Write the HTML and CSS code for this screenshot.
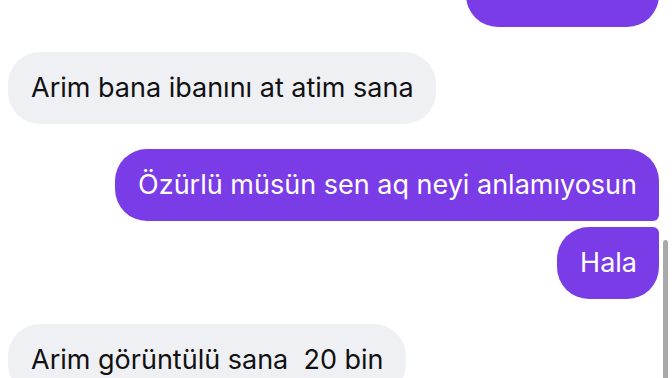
FILE: index.html
```html
<!DOCTYPE html>
<html lang="tr">
<head>
    <meta charset="UTF-8">
    <meta name="viewport" content="width=device-width, initial-scale=1.0">
    <title>Sohbet</title>
    <link rel="stylesheet" href="styles.css">
</head>
<body>
    <div class="chat">
        <div class="group outgoing">
            <div class="bubble sent first last cut"></div>
        </div>

        <div class="group incoming">
            <div class="bubble received">Arim bana ibanını at atim sana</div>
        </div>

        <div class="group outgoing">
            <div class="bubble sent first">Özürlü müsün sen aq neyi anlamıyosun</div>
            <div class="bubble sent last">Hala</div>
        </div>

        <div class="group incoming">
            <div class="bubble received">Arim görüntülü sana&nbsp; 20 bin</div>
        </div>
    </div>

    <div class="scrollbar"></div>
</body>
</html>
```

FILE: styles.css
```css
body {
    margin: 0;
    background-color: #ffffff;
    font-family: Inter, "Noto Sans", "Liberation Sans", sans-serif;
    overflow: hidden;
    height: 378px;
    position: relative;
}

.chat {
    display: flex;
    flex-direction: column;
    gap: 25px;
    padding: 0 13px 0 8px;
}

.group {
    display: flex;
    flex-direction: column;
    gap: 6px;
}

.outgoing {
    align-items: flex-end;
}

.incoming {
    align-items: flex-start;
}

.bubble {
    box-sizing: border-box;
    height: 72px;
    display: flex;
    align-items: center;
    padding: 0 22px 2px 23px;
    font-size: 27px;
    white-space: nowrap;
    border-radius: 32px;
}

.received {
    background-color: #eff0f4;
    color: #111111;
}

.sent {
    background-color: #7a3ce6;
    color: #ffffff;
}

.sent.first {
    border-bottom-right-radius: 6px;
}

.sent.last {
    border-top-right-radius: 6px;
}

.sent.first.last {
    border-radius: 32px;
}

.cut {
    margin-top: -45px;
    width: 193px;
}

.scrollbar {
    position: absolute;
    top: 240px;
    right: 4px;
    width: 5px;
    height: 160px;
    border-radius: 3px;
    background-color: #a9a9a9;
}
```
